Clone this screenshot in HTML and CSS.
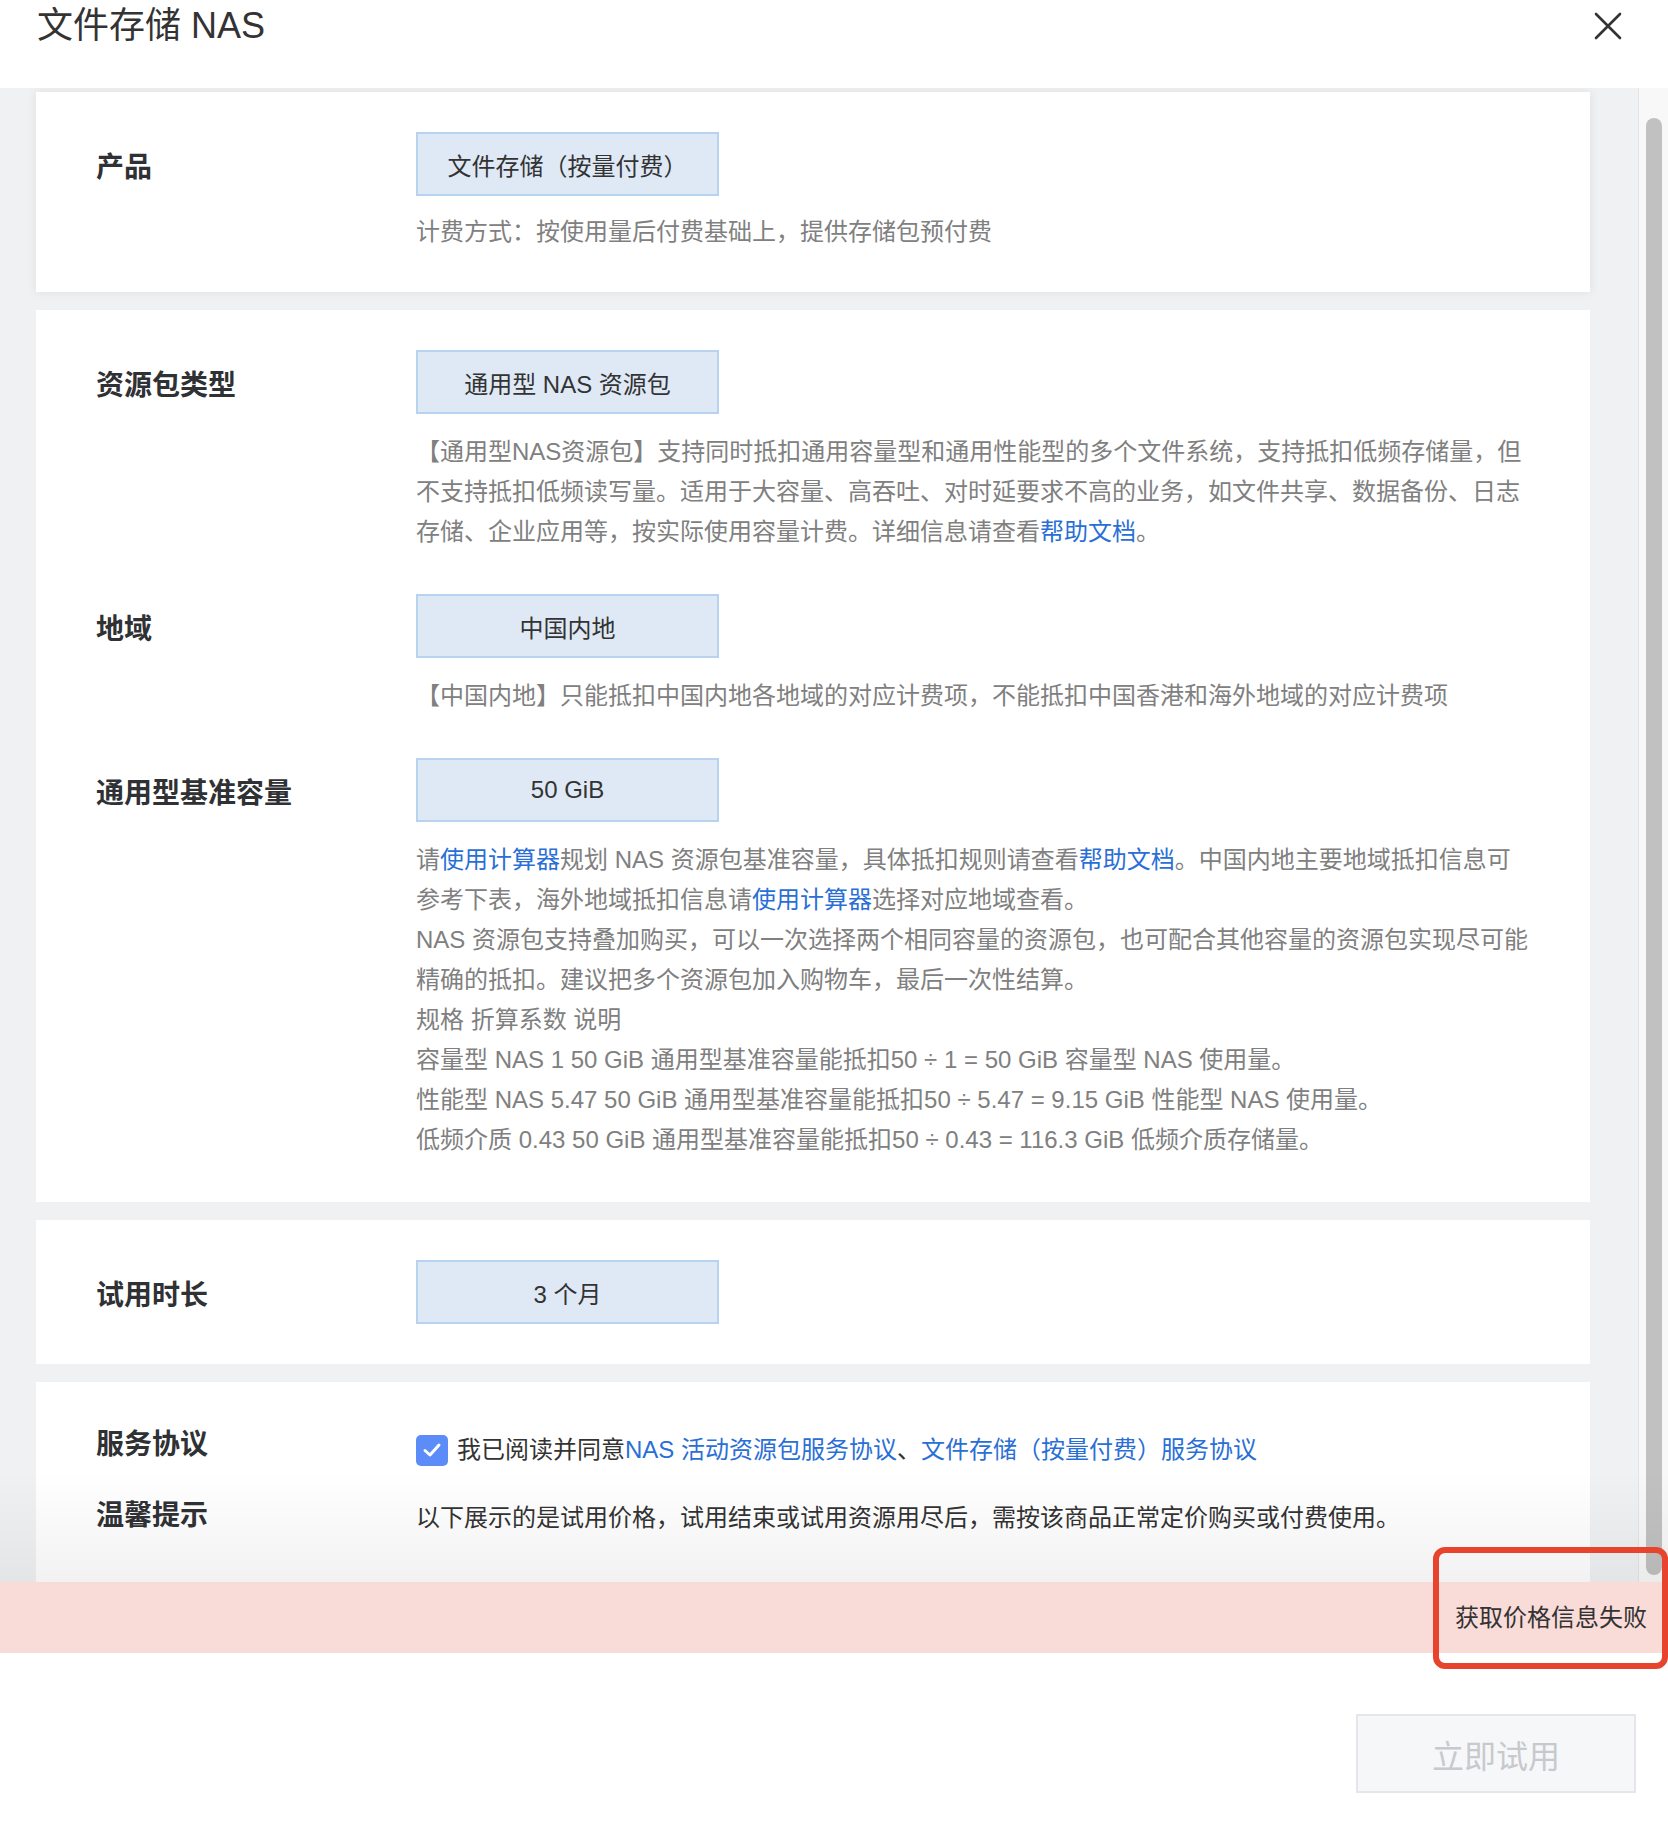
FILE: index.html
```html
<!DOCTYPE html>
<html lang="zh-CN">
<head>
<meta charset="utf-8">
<title>文件存储 NAS</title>
<link rel="stylesheet" href="styles.css">
</head>
<body>
<div class="modal">
  <header class="modal-header">
    <h1 class="modal-title">文件存储 NAS</h1>
    <button class="close-btn" aria-label="关闭">
      <svg width="28" height="28" viewBox="0 0 28 28"><path d="M2 2 L26 26 M26 2 L2 26" stroke="#333" stroke-width="2.6" fill="none" stroke-linecap="round"/></svg>
    </button>
  </header>

  <div class="modal-body">
    <div class="scroll-content">
      <section class="card card--active">
        <div class="form-row">
          <div class="label">产品</div>
          <div class="value">
            <div class="option">文件存储（按量付费）</div>
            <p class="desc desc--tight">计费方式：按使用量后付费基础上，提供存储包预付费</p>
          </div>
        </div>
      </section>

      <section class="card card--tall">
        <div class="form-row">
          <div class="label">资源包类型</div>
          <div class="value">
            <div class="option">通用型 NAS 资源包</div>
            <p class="desc">【通用型NAS资源包】支持同时抵扣通用容量型和通用性能型的多个文件系统，支持抵扣低频存储量，但<br>不支持抵扣低频读写量。适用于大容量、高吞吐、对时延要求不高的业务，如文件共享、数据备份、日志<br>存储、企业应用等，按实际使用容量计费。详细信息请查看<a class="link">帮助文档</a>。</p>
          </div>
        </div>
        <div class="form-row">
          <div class="label">地域</div>
          <div class="value">
            <div class="option">中国内地</div>
            <p class="desc">【中国内地】只能抵扣中国内地各地域的对应计费项，不能抵扣中国香港和海外地域的对应计费项</p>
          </div>
        </div>
        <div class="form-row">
          <div class="label">通用型基准容量</div>
          <div class="value">
            <div class="option">50 GiB</div>
            <div class="desc">
              <p>请<a class="link">使用计算器</a>规划 NAS 资源包基准容量，具体抵扣规则请查看<a class="link">帮助文档</a>。中国内地主要地域抵扣信息可<br>参考下表，海外地域抵扣信息请<a class="link">使用计算器</a>选择对应地域查看。</p>
              <p>NAS 资源包支持叠加购买，可以一次选择两个相同容量的资源包，也可配合其他容量的资源包实现尽可能<br>精确的抵扣。建议把多个资源包加入购物车，最后一次性结算。</p>
              <p>规格 折算系数 说明</p>
              <p>容量型 NAS 1 50 GiB 通用型基准容量能抵扣50 ÷ 1 = 50 GiB 容量型 NAS 使用量。</p>
              <p>性能型 NAS 5.47 50 GiB 通用型基准容量能抵扣50 ÷ 5.47 = 9.15 GiB 性能型 NAS 使用量。</p>
              <p>低频介质 0.43 50 GiB 通用型基准容量能抵扣50 ÷ 0.43 = 116.3 GiB 低频介质存储量。</p>
            </div>
          </div>
        </div>
      </section>

      <section class="card">
        <div class="form-row">
          <div class="label">试用时长</div>
          <div class="value">
            <div class="option">3 个月</div>
          </div>
        </div>
      </section>

      <section class="card card--terms">
        <div class="terms-row">
          <div class="label label--compact">服务协议</div>
          <div class="terms-value terms-value--first">
            <span class="checkbox"><svg width="20" height="16" viewBox="0 0 20 16"><path d="M3 8.5 L8 13 L17 3" stroke="#fff" stroke-width="3" fill="none" stroke-linecap="round" stroke-linejoin="round"/></svg></span>
            <span>我已阅读并同意<a class="link">NAS 活动资源包服务协议</a>、<a class="link">文件存储（按量付费）服务协议</a></span>
          </div>
        </div>
        <div class="terms-row">
          <div class="label label--compact">温馨提示</div>
          <div class="terms-value">以下展示的是试用价格，试用结束或试用资源用尽后，需按该商品正常定价购买或付费使用。</div>
        </div>
      </section>
    </div>
    <div class="scrollbar"><div class="scrollbar-thumb"></div></div>
  </div>

  <footer class="modal-footer">
    <div class="alert">获取价格信息失败</div>
    <div class="actions">
      <button class="btn-try" disabled>立即试用</button>
    </div>
  </footer>
</div>
<div class="annotation"></div>
</body>
</html>
```

FILE: styles.css
```css
* { box-sizing: border-box; }

html, body {
  margin: 0;
  padding: 0;
}

body {
  width: 1668px;
  height: 1822px;
  overflow: hidden;
  position: relative;
  background: #fff;
  color: #333;
  font-family: "Liberation Sans", "Noto Sans CJK SC", sans-serif;
}

p { margin: 0; }

.modal {
  display: flex;
  flex-direction: column;
  height: 1822px;
}

.modal-header {
  height: 88px;
  flex: none;
  display: flex;
  justify-content: space-between;
  align-items: flex-start;
  padding: 0 46px 0 37px;
  background: #fff;
}

.modal-title {
  margin: 0;
  font-size: 36px;
  font-weight: 400;
  line-height: 52px;
  color: #333;
}

.close-btn {
  margin-top: 12px;
  padding: 0;
  border: 0;
  background: none;
  width: 28px;
  height: 28px;
  display: flex;
}

.modal-body {
  height: 1494px;
  flex: none;
  display: flex;
  overflow: hidden;
}

.scroll-content {
  flex: 1;
  background: #eff1f3;
  padding: 4px 48px 0 36px;
  display: flex;
  flex-direction: column;
  gap: 18px;
}

.card {
  background: #fff;
  padding: 40px 40px 40px 60px;
  flex: none;
}

.card--active {
  box-shadow: 0 0 10px rgba(0, 0, 0, 0.08);
}

.card--tall {
  padding-bottom: 42px;
}

.card--terms {
  padding-bottom: 300px;
}

.form-row {
  display: grid;
  grid-template-columns: 320px 1fr;
}

.form-row + .form-row {
  margin-top: 42px;
}

.label {
  font-size: 28px;
  font-weight: 700;
  line-height: 64px;
  padding-top: 4px;
  margin-bottom: -4px;
  color: #2f3134;
}

.option {
  width: 303px;
  height: 64px;
  border: 2px solid #b7d3ee;
  background: #dfe9f6;
  display: flex;
  align-items: center;
  justify-content: center;
  font-size: 24px;
  color: #333;
}

.desc {
  margin-top: 18px;
  font-size: 24px;
  line-height: 40px;
  color: #808080;
  white-space: nowrap;
}

.desc--tight {
  margin-top: 16px;
}

.link {
  color: #2a6fd6;
  text-decoration: none;
}

.terms-row {
  display: grid;
  grid-template-columns: 320px 1fr;
}

.terms-row + .terms-row {
  margin-top: 20px;
}

.label--compact {
  line-height: 46px;
  padding-top: 0;
  margin-bottom: 0;
}

.terms-value {
  font-size: 24px;
  line-height: 46px;
  padding-top: 2px;
  color: #333;
  display: flex;
  align-items: center;
  white-space: nowrap;
}

.terms-value--first {
  padding-top: 5px;
}

.checkbox {
  width: 32px;
  height: 31px;
  border-radius: 5px;
  background: #5b8cf7;
  display: inline-flex;
  align-items: center;
  justify-content: center;
  margin-right: 9px;
  flex: none;
}

.scrollbar {
  width: 30px;
  flex: none;
  background: #f8f8f8;
  border-left: 1px solid #e3e4e6;
  padding: 30px 6px 7px 7px;
}

.scrollbar-thumb {
  height: 100%;
  border-radius: 8px;
  background: #c1c1c1;
}

.modal-footer {
  flex: 1;
  display: flex;
  flex-direction: column;
  position: relative;
}

.modal-footer::before {
  content: "";
  position: absolute;
  left: 0;
  right: 0;
  bottom: 100%;
  height: 112px;
  background: linear-gradient(to bottom, rgba(0, 0, 0, 0), rgba(0, 0, 0, 0.05));
  pointer-events: none;
}

.alert {
  height: 71px;
  background: #f9dbd8;
  font-size: 24px;
  line-height: 71px;
  text-align: right;
  padding-right: 21px;
  color: #333;
}

.actions {
  flex: 1;
  display: flex;
  justify-content: flex-end;
  padding: 61px 32px 0 0;
}

.btn-try {
  width: 280px;
  height: 79px;
  border: 2px solid #e5e6ea;
  background: #f6f7f9;
  color: #c8c9cc;
  font-family: inherit;
  font-size: 32px;
}

.annotation {
  position: absolute;
  left: 1433px;
  top: 1547px;
  width: 235px;
  height: 122px;
  border: 6px solid #e8432d;
  border-radius: 12px;
  pointer-events: none;
}
```
